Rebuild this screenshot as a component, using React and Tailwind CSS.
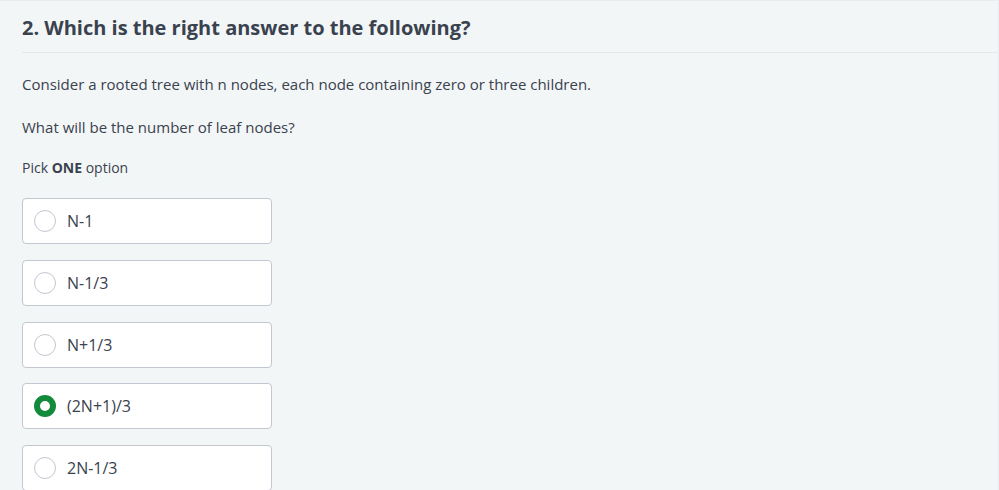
const options = ["N-1", "N-1/3", "N+1/3", "(2N+1)/3", "2N-1/3"];

function Option({ label, checked }) {
  return (
    <label className="flex items-center h-[46px] w-[250px] rounded-[4px] border border-[#c2c7d0] bg-white pl-[11px] cursor-pointer">
      {checked ? (
        <span className="w-[22px] h-[22px] rounded-full border-[6px] border-[#138a3c] bg-white" />
      ) : (
        <span className="w-[22px] h-[22px] rounded-full border border-[#c2c7d0] bg-white" />
      )}
      <span className="ml-[11px] text-[16px] text-[#39424e]">{label}</span>
    </label>
  );
}

export default function App() {
  return (
    <div
      className="h-[490px] w-[999px] overflow-hidden bg-[#f3f6f7] border-t border-r border-[#e9edef] text-[#39424e]"
      style={{ fontFamily: '"Open Sans", sans-serif' }}
    >
      <div className="ml-[22px] pt-[13px] pb-[10px] border-b border-[#e3e8ea]">
        <h2 className="text-[20px] leading-[28px] font-bold">
          2. Which is the right answer to the following?
        </h2>
      </div>
      <div className="pl-[22px]">
        <p className="mt-[20px] text-[15px] leading-[22px]">
          Consider a rooted tree with n nodes, each node containing zero or three children.
        </p>
        <p className="mt-[21px] text-[15px] leading-[22px]">What will be the number of leaf nodes?</p>
        <p className="mt-[20px] text-[14px] leading-[20px]">
          Pick <b className="font-bold">ONE</b> option
        </p>
        <div className="mt-[20px] flex flex-col gap-[15.75px]">
          {options.map((o) => (
            <Option key={o} label={o} checked={o === "(2N+1)/3"} />
          ))}
        </div>
      </div>
    </div>
  );
}
